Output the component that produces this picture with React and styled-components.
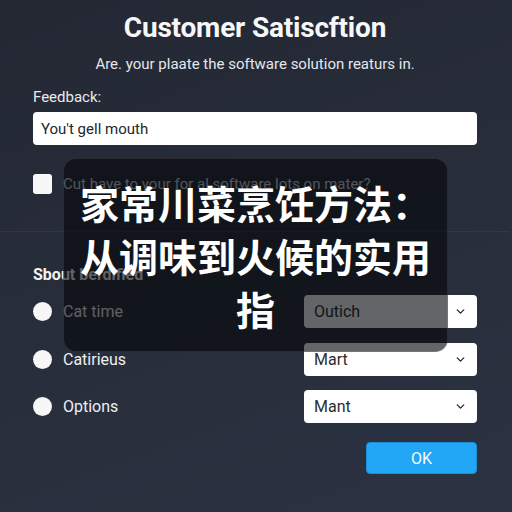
import { createGlobalStyle } from 'styled-components'
import styled from 'styled-components'
import { ChevronDown } from 'lucide-react'

const GlobalStyle = createGlobalStyle`
  html, body {
    margin: 0;
    padding: 0;
    background: #262b37;
  }
  * {
    box-sizing: border-box;
  }
`

const Page = styled.div`
  position: relative;
  width: 512px;
  height: 512px;
  overflow: hidden;
  background: linear-gradient(160deg, #232833 0%, #272d39 45%, #2b3242 100%);
  font-family: Roboto, 'Liberation Sans', sans-serif;
  color: #eceef2;
`

const Form = styled.div`
  display: flex;
  flex-direction: column;
  padding: 12px 35px 0 33px;
`

const Title = styled.h1`
  margin: 0;
  font-size: 28px;
  line-height: 32px;
  font-weight: 700;
  text-align: center;
  color: #f6f7f9;
  letter-spacing: -0.2px;
`

const Subtitle = styled.p`
  margin: 10px 0 0;
  font-size: 15px;
  line-height: 20px;
  text-align: center;
  color: #e4e7ec;
`

const Label = styled.label`
  margin-top: 13px;
  font-size: 15px;
  line-height: 20px;
  color: #e8eaee;
`

const TextInput = styled.div`
  margin-top: 5px;
  height: 33px;
  display: flex;
  align-items: center;
  padding: 0 8px;
  background: #ffffff;
  border-radius: 4px;
  font-size: 15px;
  color: #23262c;
`

const CheckRow = styled.div`
  margin-top: 29px;
  display: flex;
  align-items: center;
  gap: 11px;
  height: 20px;
  font-size: 15px;
  color: #cfd3da;
`

const Checkbox = styled.span`
  width: 19px;
  height: 20px;
  border-radius: 3px;
  background: #f7f7f8;
  flex-shrink: 0;
`

const Divider = styled.div`
  margin: 37px -33px 0;
  height: 1px;
  background: rgba(255, 255, 255, 0.05);
`

const SectionTitle = styled.h2`
  margin: 33px 0 0;
  font-size: 16px;
  line-height: 20px;
  font-weight: 700;
  color: #f2f3f5;
`

const Options = styled.div`
  margin-top: 10px;
  display: flex;
  flex-direction: column;
  gap: 14.5px;
`

const OptionRow = styled.div`
  display: flex;
  align-items: center;
  justify-content: space-between;
  height: 33px;
`

const RadioLabel = styled.div`
  display: flex;
  align-items: center;
  gap: 11px;
  font-size: 16px;
  color: #eceef1;
`

const Radio = styled.span`
  width: 19px;
  height: 19px;
  border-radius: 50%;
  background: #f7f7f8;
`

const Select = styled.div`
  width: 173px;
  height: 33px;
  display: flex;
  align-items: center;
  justify-content: space-between;
  padding: 0 10px 0 10px;
  background: #ffffff;
  border-radius: 4px;
  font-size: 16px;
  color: #2b2e33;
`

const Actions = styled.div`
  margin-top: 19px;
  display: flex;
  justify-content: flex-end;
`

const OkButton = styled.button`
  width: 111px;
  height: 32px;
  border: 1px solid #1a8fd8;
  border-radius: 4px;
  background: #22a6f6;
  color: #f4fbff;
  font-family: Roboto, 'Liberation Sans', sans-serif;
  font-size: 16px;
  cursor: pointer;
`

const Overlay = styled.div`
  position: absolute;
  left: 63px;
  top: 158px;
  width: 385px;
  height: 194px;
  padding: 17px 14px 0;
  border-radius: 13px;
  background: rgba(5, 6, 9, 0.62);
  border: 1px solid rgba(255, 255, 255, 0.1);
  display: flex;
  justify-content: center;
`

const OverlayText = styled.div`
  font-family: 'Noto Sans CJK SC', 'Noto Sans', sans-serif;
  font-weight: 700;
  font-size: 39px;
  line-height: 53px;
  color: #ffffff;
  text-align: center;
`

const choices = [
  { label: 'Cat time', value: 'Outich' },
  { label: 'Catirieus', value: 'Mart' },
  { label: 'Options', value: 'Mant' },
]

export default function App() {
  return (
    <Page>
      <GlobalStyle />
      <Form>
        <Title>Customer Satiscftion</Title>
        <Subtitle>Are. your plaate the software solution reaturs in.</Subtitle>
        <Label>Feedback:</Label>
        <TextInput>You't gell mouth</TextInput>
        <CheckRow>
          <Checkbox />
          Cut have to your for al software lots on mater?
        </CheckRow>
        <Divider />
        <SectionTitle>Sbout berdified</SectionTitle>
        <Options>
          {choices.map((c) => (
            <OptionRow key={c.label}>
              <RadioLabel>
                <Radio />
                {c.label}
              </RadioLabel>
              <Select>
                {c.value}
                <ChevronDown size={13} strokeWidth={2.6} color="#2b2e33" />
              </Select>
            </OptionRow>
          ))}
        </Options>
        <Actions>
          <OkButton>OK</OkButton>
        </Actions>
      </Form>
      <Overlay>
        <OverlayText>家常川菜烹饪方法：从调味到火候的实用指</OverlayText>
      </Overlay>
    </Page>
  )
}
